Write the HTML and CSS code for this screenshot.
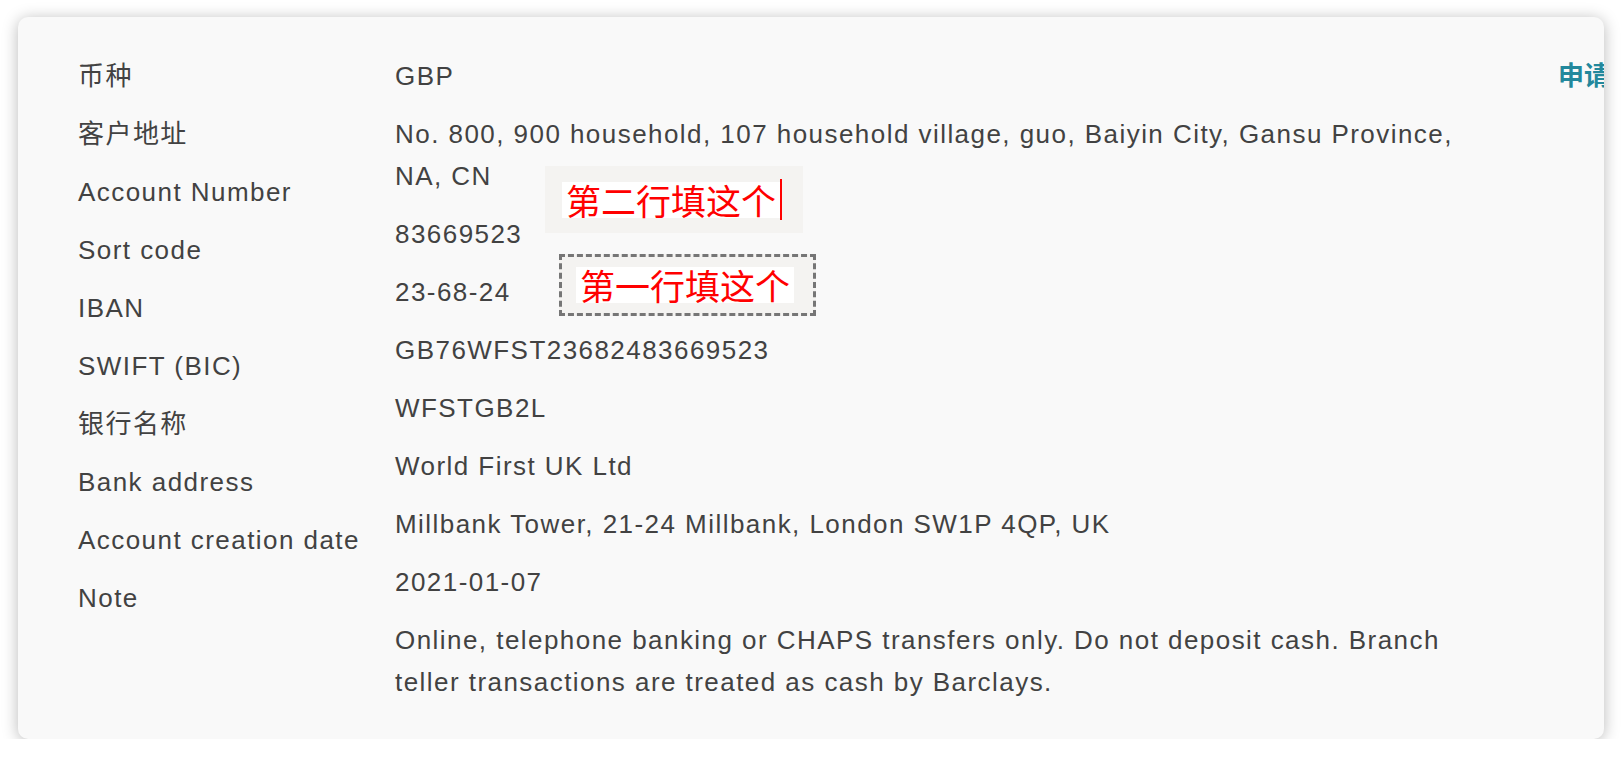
FILE: index.html
```html
<!DOCTYPE html>
<html lang="zh-CN">
<head>
<meta charset="UTF-8" />
<meta name="viewport" content="width=device-width, initial-scale=1" />
<title>账户信息</title>
<link rel="stylesheet" href="styles.css">
</head>
<body>
  <!-- Account details card -->
  <div class="card">
    <div class="details">
      <ul class="labels">
        <li>币种</li>
        <li>客户地址</li>
        <li>Account Number</li>
        <li>Sort code</li>
        <li>IBAN</li>
        <li>SWIFT (BIC)</li>
        <li>银行名称</li>
        <li>Bank address</li>
        <li>Account creation date</li>
        <li>Note</li>
      </ul>
      <ul class="values">
        <li>GBP</li>
        <li>No. 800, 900 household, 107 household village, guo, Baiyin City, Gansu Province, NA, CN</li>
        <li>83669523</li>
        <li>23-68-24</li>
        <li>GB76WFST23682483669523</li>
        <li>WFSTGB2L</li>
        <li>World First UK Ltd</li>
        <li>Millbank Tower, 21-24 Millbank, London SW1P 4QP, UK</li>
        <li>2021-01-07</li>
        <li>Online, telephone banking or CHAPS transfers only. Do not deposit cash. Branch teller transactions are treated as cash by Barclays.</li>
      </ul>
      <div class="actions">
        <a href="#" class="apply">申请证明</a>
      </div>
    </div>

    <!-- Pasted annotations -->
    <div class="note note-second">
      <span>第二行填这个</span><i class="caret"></i>
    </div>
    <div class="note note-first">
      <span>第一行填这个</span>
    </div>
  </div>
</body>
</html>
```

FILE: styles.css
```css
/* --- Reset and basics --- */
* {
  box-sizing: border-box;
  margin: 0;
  padding: 0;
}
body {
  background: #fff;
  font-family: 'Liberation Sans', 'Noto Sans CJK SC', sans-serif;
  color: #424242;
  padding: 17px 18px 0 18px;
}

/* --- Card --- */
.card {
  position: relative;
  width: 1586px;
  height: 722px;
  background: #f9f9f9;
  border-radius: 10px;
  box-shadow: 0 2px 16px rgba(0, 0, 0, 0.28);
  overflow: hidden;
  padding: 38px 0 0 60px;
}

.details {
  display: flex;
  font-size: 26px;
  line-height: 42px;
  letter-spacing: 1.45px;
}
.labels, .values {
  list-style: none;
  display: flex;
  flex-direction: column;
  gap: 16px;
  flex: none;
}
.labels { width: 317px; }
.values { width: 1085px; }

.actions {
  flex: none;
  margin-left: 78px;
  white-space: nowrap;
}
.apply {
  color: #23889c;
  font-weight: 700;
  text-decoration: none;
  letter-spacing: 0;
}

/* --- Annotation stickers --- */
.note {
  position: absolute;
  display: flex;
  align-items: center;
  background: #f4f3f1;
  font-family: 'Noto Sans CJK SC', sans-serif;
  font-size: 35px;
  line-height: 36px;
  color: #ff0000;
}
.note span {
  background: #fff;
  padding: 0 4px;
}
.note-second {
  left: 527px;
  top: 149px;
  width: 258px;
  height: 67px;
  padding-left: 17px;
}
.caret {
  width: 2px;
  height: 41px;
  background: #ff0000;
}
.note-first {
  left: 541px;
  top: 237px;
  width: 257px;
  height: 62px;
  border: 3px dashed #767676;
  padding-left: 14px;
}
```
